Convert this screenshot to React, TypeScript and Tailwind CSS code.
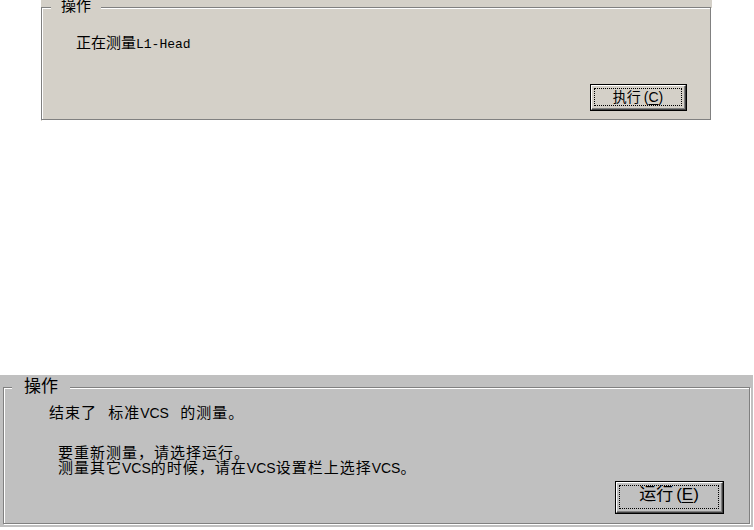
import React from "react";

const cjk = "font-['Liberation_Sans','Noto_Sans_CJK_SC',sans-serif]";

interface WinButtonProps {
  label: string;
  hotkey: string;
  bg: string;
  className?: string;
  textClass?: string;
}

// classic default push button: black frame, 3d bevel, dotted focus rect
const WinButton: React.FC<WinButtonProps> = ({ label, hotkey, bg, className, textClass }) => {
  return (
    <div className={`border border-black ${bg} ${className ?? ""}`}>
      <div className="h-full w-full border border-t-white border-l-white border-b-[#404040] border-r-[#404040]">
        <div className="h-full w-full border-r border-b border-[#808080] p-[2px]">
          <div className="h-full w-full border border-dotted border-black flex items-center justify-center">
            <span className={`${cjk} text-black ${textClass ?? ""}`}>
              {label}
              <span className="ml-[3px]">(</span>
              <span className="underline underline-offset-2">{hotkey}</span>
              <span>)</span>
            </span>
          </div>
        </div>
      </div>
    </div>
  );
};

const Vcs = () => <span className="font-['Liberation_Sans',sans-serif] text-[14px] tracking-normal">VCS</span>;

export default function App() {
  return (
    <div className="w-[754px] h-[530px] bg-white overflow-hidden flex flex-col">
      {/* upper panel */}
      <div className="ml-[41px] w-[671px] h-[121px] bg-[#d4d0c8] pt-[7px]">
        <div className="relative w-[670px] h-[113px] border border-[#808080] shadow-[inset_1px_1px_0_#fff,1px_1px_0_#fff] flex flex-col pl-[34px] pt-[26px] pr-[23px] pb-[8px]">
          <span className={`absolute left-[9px] top-[-10px] px-[10px] bg-[#d4d0c8] ${cjk} text-[15px] leading-[16px] text-black`}>
            操作
          </span>
          <p className="text-[15px] leading-[16px] text-black">
            <span className={cjk}>正在测量</span>
            <span className="font-['Liberation_Mono',monospace] text-[13px]">L1-Head</span>
          </p>
          <WinButton
            label="执行"
            hotkey="C"
            bg="bg-[#d4d0c8]"
            className="mt-auto self-end w-[97px] h-[27px]"
            textClass="text-[14px] leading-[15px]"
          />
        </div>
      </div>

      {/* lower panel */}
      <div className="mt-[254px] w-[753px] h-[152px] bg-[#c0c0c0] pt-[12px] pl-[3px]">
        <div className="relative w-[747px] h-[137px] border border-[#808080] shadow-[inset_1px_1px_0_#fff,1px_1px_0_#fff] flex flex-col pl-[45px] pt-[17px] pr-[25px] pb-[9px]">
          <span className={`absolute left-[8px] top-[-10px] px-[12px] bg-[#c0c0c0] ${cjk} text-[17px] leading-[17px] text-black`}>
            操作
          </span>
          <p className={`${cjk} text-[15px] leading-[16px] text-black tracking-[1px] [word-spacing:6px]`}>
            结束了 标准<Vcs /> 的测量。
          </p>
          <div className={`${cjk} mt-[24px] ml-[9px] text-[15px] leading-[15px] text-black tracking-[1px] flex flex-col`}>
            <p>要重新测量，请选择运行。</p>
            <p>
              测量其它<Vcs />的时候，请在<Vcs />设置栏上选择<Vcs />。
            </p>
          </div>
          <WinButton
            label="运行"
            hotkey="E"
            bg="bg-[#c0c0c0]"
            className="mt-auto self-end w-[109px] h-[33px]"
            textClass="text-[17px] leading-[17px] -mt-[6px]"
          />
        </div>
      </div>
    </div>
  );
}
